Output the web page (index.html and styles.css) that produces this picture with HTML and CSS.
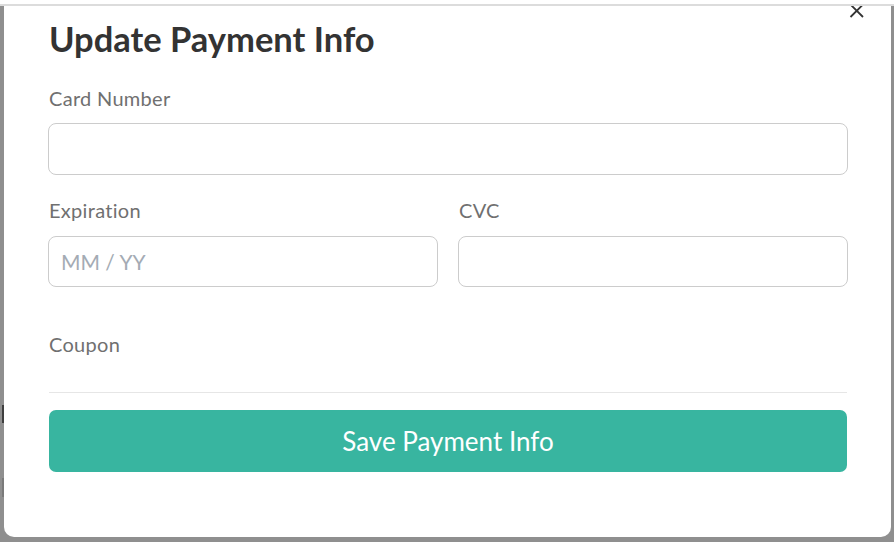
FILE: index.html
```html
<!DOCTYPE html>
<html lang="en">
<head>
<meta charset="utf-8">
<title>Update Payment Info</title>
<link rel="stylesheet" href="styles.css">
</head>
<body>
<div class="screen">
  <span class="bg-mark bg-mark-dark"></span>
  <span class="bg-mark bg-mark-light"></span>
  <div class="modal">
    <button class="close" aria-label="Close">
      <svg width="15" height="12" viewBox="0 0 15 12"><path d="M1.5 -1.5 L14 11 M14 -1.5 L1.5 11" stroke="#333" stroke-width="1.8" fill="none"/></svg>
    </button>
    <h1 class="title">Update Payment Info</h1>
    <label class="label label-first">Card Number</label>
    <div class="input"></div>
    <div class="row">
      <div class="field">
        <label class="label">Expiration</label>
        <div class="input input-short"><span class="placeholder">MM / YY</span></div>
      </div>
      <div class="field">
        <label class="label">CVC</label>
        <div class="input input-short"></div>
      </div>
    </div>
    <label class="label label-coupon">Coupon</label>
    <hr class="divider">
    <button class="save">Save Payment Info</button>
  </div>
</div>
</body>
</html>
```

FILE: styles.css
```css
html, body {
  margin: 0;
  padding: 0;
  background: #ffffff;
}

body {
  font-family: Lato, "Open Sans", sans-serif;
  width: 894px;
  height: 544px;
  overflow: hidden;
}

.screen {
  margin-top: 4px;
  border-top: 2px solid #dcdcdc;
  height: 538px;
  box-sizing: border-box;
  background: #8f8f8f;
  padding: 0 3px 5px 4px;
  display: flex;
  position: relative;
}

.bg-mark {
  position: absolute;
  left: 2px;
  width: 2px;
}

.bg-mark-dark {
  top: 399px;
  height: 18px;
  background: #3e3e3e;
}

.bg-mark-light {
  top: 472px;
  height: 19px;
  background: #7a7a7a;
}

.modal {
  flex: 1;
  background: #ffffff;
  border-radius: 0 0 10px 10px;
  padding: 13px 43px 0 44px;
  position: relative;
  display: flex;
  flex-direction: column;
}

.close {
  position: absolute;
  top: 0;
  right: 27px;
  border: 0;
  padding: 0;
  margin: 0;
  background: none;
  line-height: 0;
}

.close svg {
  display: block;
}

.title {
  margin: 0;
  font-size: 34.5px;
  line-height: 40px;
  font-weight: 700;
  color: #333333;
  padding-left: 1px;
}

.label {
  display: block;
  font-size: 20px;
  letter-spacing: 0.3px;
  line-height: 24px;
  color: #707070;
  padding-left: 1px;
  margin-top: 23px;
}

.label-first {
  margin-top: 27px;
}

.label-coupon {
  margin-top: 45px;
}

.input {
  margin-top: 13px;
  height: 52px;
  box-sizing: border-box;
  border: 1px solid #cccccc;
  border-radius: 8px;
  background: #ffffff;
  display: flex;
  align-items: center;
  padding: 0 12px;
}

.input-short {
  margin-top: 14px;
  height: 51px;
}

.placeholder {
  font-size: 21px;
  color: #a4abb4;
}

.row {
  display: grid;
  grid-template-columns: 1fr 1fr;
  column-gap: 20px;
}

.divider {
  margin: 36px 1px 0 1px;
  border: 0;
  height: 1px;
  background: #e6e6e6;
}

.save {
  margin: 17px 1px 0 1px;
  height: 62px;
  border: 0;
  border-radius: 7px;
  background: #38b5a0;
  color: #ffffff;
  font-family: Lato, "Open Sans", sans-serif;
  font-size: 26px;
  padding: 0;
}
```
